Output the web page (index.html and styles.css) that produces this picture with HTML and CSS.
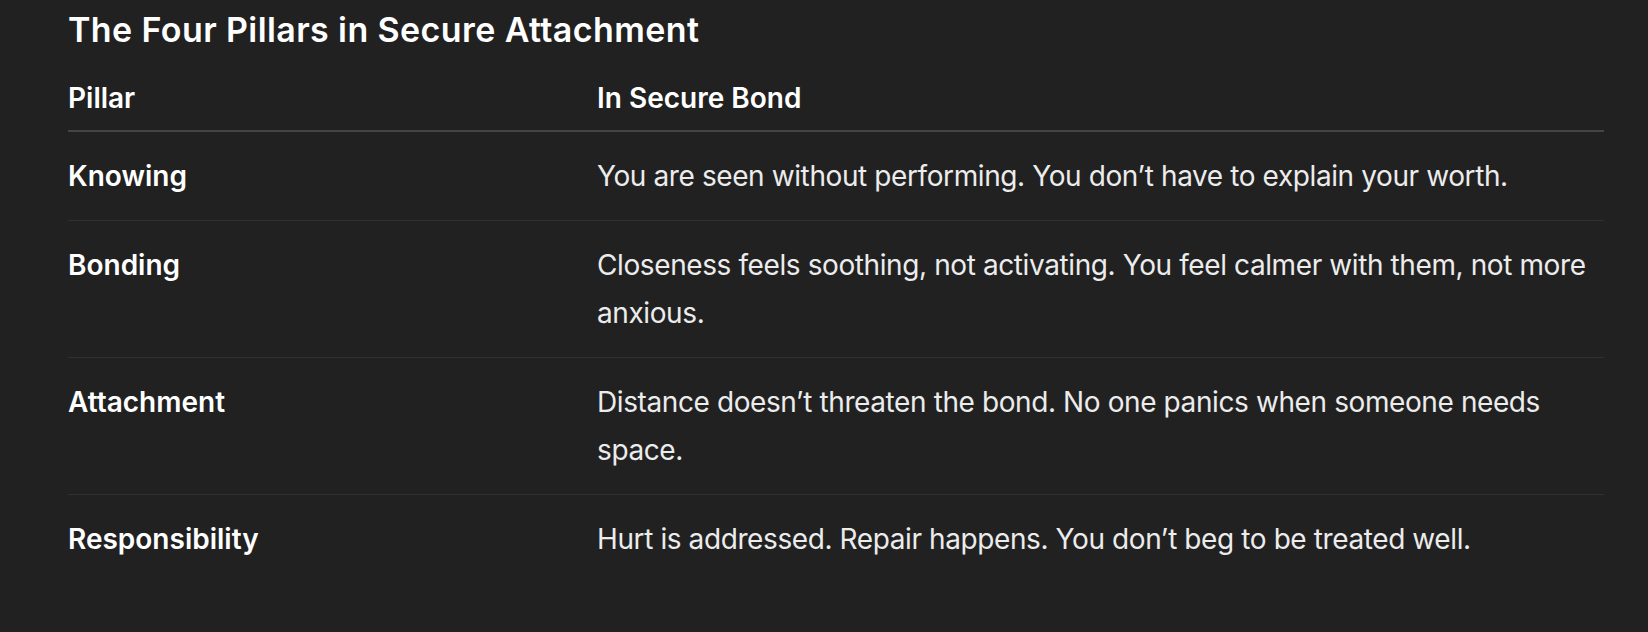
FILE: index.html
```html
<!DOCTYPE html>
<html lang="en">
<head>
<meta charset="utf-8">
<title>The Four Pillars in Secure Attachment</title>
<link rel="stylesheet" href="styles.css">
</head>
<body>
<main class="doc">
  <h3 class="doc-title">The Four Pillars in Secure Attachment</h3>
  <table class="pillars">
    <thead>
      <tr>
        <th class="col-name">Pillar</th>
        <th class="col-desc">In Secure Bond</th>
      </tr>
    </thead>
    <tbody>
      <tr>
        <td class="cell-name">Knowing</td>
        <td class="cell-desc">You are seen without performing. You don’t have to explain your worth.</td>
      </tr>
      <tr>
        <td class="cell-name">Bonding</td>
        <td class="cell-desc">Closeness feels soothing, not activating. You feel calmer with them, not more anxious.</td>
      </tr>
      <tr>
        <td class="cell-name">Attachment</td>
        <td class="cell-desc">Distance doesn’t threaten the bond. No one panics when someone needs space.</td>
      </tr>
      <tr>
        <td class="cell-name">Responsibility</td>
        <td class="cell-desc">Hurt is addressed. Repair happens. You don’t beg to be treated well.</td>
      </tr>
    </tbody>
  </table>
</main>
</body>
</html>
```

FILE: styles.css
```css
html, body {
  margin: 0;
  padding: 0;
  background: #212121;
}

body {
  font-family: Inter, "Noto Sans", "Liberation Sans", sans-serif;
  color: #ececec;
  width: 1648px;
  height: 632px;
  overflow: hidden;
}

.doc {
  padding: 10px 44px 0 68px;
}

.doc-title {
  margin: 0 0 24px 0;
  font-size: 34px;
  line-height: 40px;
  font-weight: 600;
  letter-spacing: 0.4px;
  color: #ffffff;
}

.pillars {
  width: 1536px;
  border-collapse: collapse;
  font-size: 28px;
  line-height: 48px;
  letter-spacing: -0.4px;
}

.pillars th {
  text-align: left;
  font-weight: 600;
  letter-spacing: 0;
  color: #ffffff;
  padding: 0 0 8px 0;
  border-bottom: 2px solid #444444;
}

.col-name {
  width: 529px;
}

.pillars td {
  padding: 20px 0;
  vertical-align: top;
  border-bottom: 1px solid #303030;
}

.pillars tbody tr:last-child td {
  border-bottom: none;
}

.cell-name {
  font-weight: 600;
  letter-spacing: 0;
  color: #ffffff;
}

.cell-desc {
  padding-right: 0;
}
```
